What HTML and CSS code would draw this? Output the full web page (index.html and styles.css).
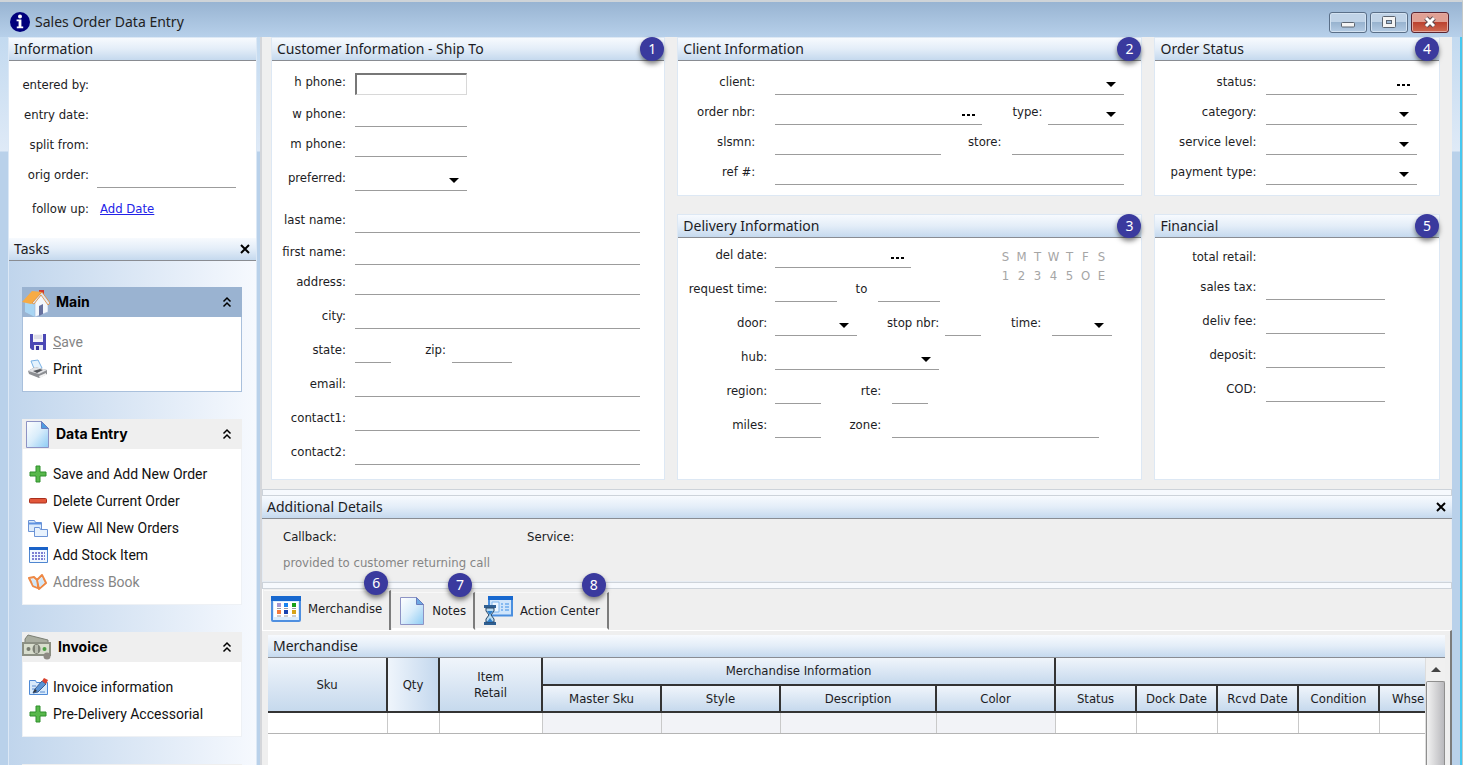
FILE: index.html
```html
<!DOCTYPE html>
<html lang="en">
<head>
<meta charset="utf-8">
<title>Sales Order Data Entry</title>
<link rel="stylesheet" href="styles.css">
</head>
<body>
<div class="window">
  <header class="titlebar">
    <svg class="app-icon" viewBox="0 0 20 20" width="20" height="20"><circle cx="10" cy="10" r="10" fill="#00007c"/><circle cx="10" cy="4.4" r="2" fill="#fff"/><path d="M6.6 7.6h4.8v7h1.8v1.6H6.8v-1.6h1.8V9.2h-2z" fill="#fff"/></svg>
    <h1>Sales Order Data Entry</h1>
    <div class="win-buttons">
      <button class="win-btn" aria-label="Minimize"><svg width="16" height="14" viewBox="0 0 16 14"><rect x="1.5" y="7.5" width="13" height="4.500" rx="1" fill="#f4f4f4" stroke="#5b6470"/></svg></button>
      <button class="win-btn" aria-label="Maximize"><svg width="16" height="14" viewBox="0 0 16 14"><rect x="1.500" y="1.500" width="13" height="11" rx="1" fill="#f4f4f4" stroke="#5b6470"/><rect x="5.500" y="5.500" width="5" height="3" fill="#9db8d4" stroke="#5b6470"/></svg></button>
      <button class="win-btn win-close" aria-label="Close"><svg width="16" height="14" viewBox="0 0 16 14"><path d="M4 3l8 8M12 3l-8 8" stroke="#5d4a50" stroke-width="5"/><path d="M4 3l8 8M12 3l-8 8" stroke="#fff" stroke-width="3"/></svg></button>
    </div>
  </header>

  <div class="workspace">
    <aside class="sidebar">
      <section class="info">
        <h2 class="bar">Information</h2>
        <div class="info-body">
          <div class="row r36"><span class="label">entered by:</span></div>
          <div class="row"><span class="label">entry date:</span></div>
          <div class="row"><span class="label">split from:</span></div>
          <div class="row"><label class="label" for="orig">orig order:</label><input id="orig" class="line"></div>
          <div class="row r34"><span class="label">follow up:</span><a href="#" class="add-date">Add Date</a></div>
        </div>
      </section>
      <section class="tasks">
        <div class="bar"><h2>Tasks</h2><button class="x" aria-label="Close tasks"><svg width="10" height="10" viewBox="0 0 10 10"><path d="M1 1l8 8M9 1L1 9" stroke="#000" stroke-width="2"/></svg></button></div>
        <div class="tasks-body">
          <section class="group group-main">
            <h3><svg width="28" height="29" viewBox="0 0 28 29"><path d="M17 2h5v9h-5z" fill="#cf3a30"/><path d="M3 14v10l10 5V14L9 7z" fill="#a9d5f3"/><path d="M13 14l7-8 6 9v9l-13 5z" fill="#f3f7fc" stroke="#9fb6d8" stroke-width=".6"/><path d="M0 14L10 3l10 1-9 11-2 1z" fill="#f7ab45"/><path d="M20 4l8 11-2 2-7-10-7 9-2-1z" fill="#dfe7f3" stroke="#e08a35" stroke-width=".8"/><path d="M17 18l4-2v10l-4 2z" fill="#66709e"/></svg><span>Main</span>
              <button class="fold" aria-label="Collapse Main"><svg width="10" height="12" viewBox="0 0 10 12"><path d="M1.500 5.500L5 2l3.500 3.500M1.500 10.500L5 7l3.500 3.500" fill="none" stroke="#000" stroke-width="1.500"/></svg></button></h3>
            <div class="group-body">
              <button class="task off"><svg width="20" height="20" viewBox="0 0 20 20"><path d="M2 2h16v16H4l-2-2z" fill="#4a48b4"/><path d="M5 2h10v8H5z" fill="#f5f5f7"/><path d="M6 4h8M6 6h8" stroke="#c9c9d8"/><path d="M6 13h9v5H6z" fill="#e6e8f2"/><path d="M8 14h3v4H8z" fill="#35339b"/></svg><span><u>S</u>ave</span></button>
              <button class="task"><svg width="20" height="20" viewBox="0 0 20 20"><path d="M3 2l7-1 4 8-7 3z" fill="#e4f2fd" stroke="#7ab2e6"/><path d="M0 12l7-4 12 3v4l-8 4L1 15z" fill="#8d8f93"/><path d="M0 12l7-4 12 3-8 4z" fill="#e2e3e6"/><path d="M5 12l7-2 3 1-6 3z" fill="#55585d"/><path d="M11 17l7-3v2l-6 3z" fill="#f2f2f2"/></svg><span>Print</span></button>
            </div>
          </section>
          <section class="group">
            <h3><svg width="28" height="29" viewBox="0 0 28 29"><defs><linearGradient id="pg" x1="0" y1="0" x2="1" y2="1"><stop offset="0" stop-color="#fff"/><stop offset=".5" stop-color="#d9edfb"/><stop offset="1" stop-color="#8ccbf4"/></linearGradient></defs><path d="M4.500 1.500h15l7 7v19h-22z" fill="url(#pg)" stroke="#8d93c4"/><path d="M19.500 1.500v7h7z" fill="#4f9be0" stroke="#6a7cbd"/></svg><span>Data Entry</span>
              <button class="fold" aria-label="Collapse Data Entry"><svg width="10" height="12" viewBox="0 0 10 12"><path d="M1.500 5.500L5 2l3.500 3.500M1.500 10.500L5 7l3.500 3.500" fill="none" stroke="#000" stroke-width="1.500"/></svg></button></h3>
            <div class="group-body">
              <button class="task"><svg width="20" height="20" viewBox="0 0 20 20"><path d="M8 2h4v6h6v4h-6v6H8v-6H2V8h6z" fill="#58b84b" stroke="#2f8f2c"/></svg><span>Save and Add New Order</span></button>
              <button class="task"><svg width="20" height="20" viewBox="0 0 20 20"><rect x="1.500" y="7.500" width="17" height="4.500" rx="1" fill="#e2573a" stroke="#a92f1d"/></svg><span>Delete Current Order</span></button>
              <button class="task"><svg width="20" height="20" viewBox="0 0 20 20"><path d="M.5 2.500h6l1 2h6v9h-13z" fill="#dcebfb" stroke="#6b93d6"/><path d="M1 5.500h12" stroke="#5f92e0" stroke-width="2"/><path d="M6.500 9.500h5l1 2h7v7h-13z" fill="#e8f2fd" stroke="#6b93d6"/></svg><span>View All New Orders</span></button>
              <button class="task"><svg width="20" height="20" viewBox="0 0 20 20"><path d="M1.500 2.500h18v15h-18z" fill="#f2f8ff" stroke="#4f86d0"/><path d="M1 2h19v3H1z" fill="#1a62c8"/><path d="M4 8h13M4 11h13M4 14h13" stroke="#7d7fd2" stroke-width="2" stroke-dasharray="2 1"/></svg><span>Add Stock Item</span></button>
              <button class="task off"><svg width="20" height="20" viewBox="0 0 20 20"><path d="M1 6l5-1 3 3 1 8-5-2zM9 8l5-5 4 8-7 6z" fill="#e4f1fb" stroke="#ee8844" stroke-width="2" stroke-linejoin="round"/><path d="M4 7l4 2 1 6-4-2zM11 9l3-4 2 6-4 4z" fill="#cfe6f8"/></svg><span>Address Book</span></button>
            </div>
          </section>
          <section class="group">
            <h3><svg width="30" height="26" viewBox="0 0 30 26"><path d="M3 5l3-4 20 5v5H3z" fill="#a9ada0" stroke="#7b7f74"/><path d="M0 8h29v14H0z" fill="#8c9083"/><path d="M2 10h25v10H2z" fill="#d8ddcd"/><ellipse cx="14.500" cy="15" rx="4" ry="5" fill="#7c8074"/><path d="M13 11h3v8h-3z" fill="#b7bbae"/><circle cx="6.500" cy="15" r="2" fill="#777b6f"/><circle cx="22.500" cy="15" r="2" fill="#4e9f45"/><circle cx="25" cy="22" r="3.500" fill="#8e8a83"/></svg><span>Invoice</span>
              <button class="fold" aria-label="Collapse Invoice"><svg width="10" height="12" viewBox="0 0 10 12"><path d="M1.500 5.500L5 2l3.500 3.500M1.500 10.500L5 7l3.500 3.500" fill="none" stroke="#000" stroke-width="1.500"/></svg></button></h3>
            <div class="group-body">
              <button class="task"><svg width="20" height="20" viewBox="0 0 20 20"><path d="M1.500 3.500h6l1 2h11v12h-18z" fill="#d8eafb" stroke="#4f8ad6"/><path d="M4 9h4M4 12h4M12 15h5" stroke="#5a8cd0"/><path d="M5 16l2-4 7-8 4 3-8 8z" fill="#5a93d4" stroke="#3b5e94"/><path d="M14 4l2-3 4 2-2 4z" fill="#d8432f"/><path d="M5 16l2-4 2 2z" fill="#333"/></svg><span>Invoice information</span></button>
              <button class="task"><svg width="20" height="20" viewBox="0 0 20 20"><path d="M8 2h4v6h6v4h-6v6H8v-6H2V8h6z" fill="#58b84b" stroke="#2f8f2c"/></svg><span>Pre-Delivery Accessorial</span></button>
            </div>
          </section>
          <section class="group"><h3><svg width="28" height="28" viewBox="0 0 28 28"><path d="M14 0l4 9 9 1-7 6 2 9-8-5-8 5 2-9-7-6 9-1z" fill="#f4d84a"/></svg></h3></section>
        </div>
      </section>
    </aside>

    <main class="main">
      <form class="panels">
        <section class="panel customer">
          <h2 class="bar">Customer Information - Ship To</h2><span class="badge">1</span>
          <div class="row r34"><label class="label" for="hp">h phone:</label><input id="hp" class="boxed w112"></div>
          <div class="row r32"><label class="label" for="wp">w phone:</label><input id="wp" class="line w112"></div>
          <div class="row"><label class="label" for="mp">m phone:</label><input id="mp" class="line w112"></div>
          <div class="row r34"><label class="label" for="pref">preferred:</label><span class="combo w112"><select id="pref"></select></span></div>
          <div class="row r42"><label class="label" for="ln">last name:</label><input id="ln" class="line"></div>
          <div class="row r32"><label class="label" for="fn">first name:</label><input id="fn" class="line"></div>
          <div class="row"><label class="label" for="ad">address:</label><input id="ad" class="line"></div>
          <div class="row r34"><label class="label" for="ci">city:</label><input id="ci" class="line"></div>
          <div class="row r34"><label class="label" for="st">state:</label><input id="st" class="line w36"><label class="label l50" for="zip">zip:</label><input id="zip" class="line w60"></div>
          <div class="row r34"><label class="label" for="em">email:</label><input id="em" class="line"></div>
          <div class="row r34"><label class="label" for="c1">contact1:</label><input id="c1" class="line"></div>
          <div class="row r34"><label class="label" for="c2">contact2:</label><input id="c2" class="line"></div>
        </section>

        <section class="panel client">
          <h2 class="bar">Client Information</h2><span class="badge">2</span>
          <div class="row r34"><label class="label" for="cl">client:</label><span class="combo"><select id="cl"></select></span></div>
          <div class="row"><label class="label" for="on">order nbr:</label><span class="lookup"><input id="on"><button type="button" aria-label="Look up order"><i></i></button></span><label class="label l60" for="ty">type:</label><span class="combo w76 near"><select id="ty"></select></span></div>
          <div class="row"><label class="label" for="sl">slsmn:</label><input id="sl" class="line"><label class="label l60" for="sto">store:</label><input id="sto" class="line w112 mid"></div>
          <div class="row"><label class="label" for="rf">ref #:</label><input id="rf" class="line"></div>
        </section>

        <section class="panel status">
          <h2 class="bar">Order Status</h2><span class="badge">4</span>
          <div class="row r34"><label class="label" for="os">status:</label><span class="lookup"><input id="os"><button type="button" aria-label="Look up status"><i></i></button></span></div>
          <div class="row"><label class="label" for="ca">category:</label><span class="combo"><select id="ca"></select></span></div>
          <div class="row"><label class="label" for="sv">service level:</label><span class="combo"><select id="sv"></select></span></div>
          <div class="row"><label class="label" for="pt">payment type:</label><span class="combo"><select id="pt"></select></span></div>
        </section>

        <section class="panel delivery">
          <h2 class="bar">Delivery Information</h2><span class="badge">3</span>
          <div class="split">
            <div>
              <div class="row"><label class="label" for="dd">del date:</label><span class="lookup w136"><input id="dd"><button type="button" aria-label="Pick delivery date"><i></i></button></span></div>
              <div class="row r34"><label class="label" for="rt1">request time:</label><input id="rt1" class="line w62"><label class="label l30" for="rt2">to</label><input id="rt2" class="line w62 mid"></div>
            </div>
            <div class="days"><span>S</span><span>M</span><span>T</span><span>W</span><span>T</span><span>F</span><span>S</span><span>1</span><span>2</span><span>3</span><span>4</span><span>5</span><span>O</span><span>E</span></div>
          </div>
          <div class="row r34"><label class="label" for="do">door:</label><span class="combo w82"><select id="do"></select></span><label class="label l80" for="sn">stop nbr:</label><input id="sn" class="line w36 near"><label class="label l60" for="ti">time:</label><span class="combo w60 mid"><select id="ti"></select></span></div>
          <div class="row r34"><label class="label" for="hu">hub:</label><span class="combo w164"><select id="hu"></select></span></div>
          <div class="row r34"><label class="label" for="re">region:</label><input id="re" class="line w46"><label class="label l60" for="rte">rte:</label><input id="rte" class="line w36 mid"></div>
          <div class="row r34"><label class="label" for="mi">miles:</label><input id="mi" class="line w46"><label class="label l60" for="zo">zone:</label><input id="zo" class="line mid"></div>
        </section>

        <section class="panel financial">
          <h2 class="bar">Financial</h2><span class="badge">5</span>
          <div class="row r32"><span class="label">total retail:</span></div>
          <div class="row"><label class="label" for="tx">sales tax:</label><input id="tx" class="line"></div>
          <div class="row r34"><label class="label" for="df">deliv fee:</label><input id="df" class="line"></div>
          <div class="row r34"><label class="label" for="dp">deposit:</label><input id="dp" class="line"></div>
          <div class="row r34"><label class="label" for="cod">COD:</label><input id="cod" class="line"></div>
        </section>
      </form>

      <div class="splitter"></div>
      <section class="details">
        <div class="bar"><h2>Additional Details</h2><button class="x" aria-label="Close details"><svg width="10" height="10" viewBox="0 0 10 10"><path d="M1 1l8 8M9 1L1 9" stroke="#000" stroke-width="2"/></svg></button></div>
        <div class="details-body"><span>Callback:</span><span>Service:</span><span class="hint">provided to customer returning call</span></div>
      </section>
      <div class="splitter"></div>

      <nav class="tabs">
        <button class="tab active"><svg width="30" height="26" viewBox="0 0 30 26"><rect x="1" y="1" width="28" height="24" rx="1" fill="#dcedfd" stroke="#4f8fe0" stroke-width="2"/><path d="M0 0h30v5H0z" fill="#1768cf"/><path d="M3 6h24v15H3z" fill="#fff"/><path d="M6 7h4v4H6z" fill="#a597cf"/><path d="M13 7h4v4h-4z" fill="#1a84f0"/><path d="M21 7h4v4h-4z" fill="#18a018"/><path d="M6 14h4v4H6z" fill="#f47b3c"/><path d="M13 14h4v4h-4z" fill="#1742b0"/><path d="M21 14h4v4h-4z" fill="#d6a318"/><path d="M6 12.500h4M13 12.500h4M21 12.500h4M6 20h4M13 20h4M21 20h4" stroke="#9a9aa2"/></svg><span>Merchandise</span><span class="badge">6</span></button>
        <button class="tab"><svg width="26" height="30" viewBox="0 0 26 30"><path d="M1.500 1.500h16l7 7v20h-23z" fill="url(#pg)" stroke="#8d93c4"/><path d="M17.500 1.500v7h7z" fill="#6da9e4" stroke="#6a7cbd"/></svg><span>Notes</span><span class="badge">7</span></button>
        <button class="tab"><svg width="30" height="30" viewBox="0 0 30 30"><rect x="6" y="1.500" width="23" height="18" fill="#cfe5fb" stroke="#4a8fdf" stroke-width="2"/><path d="M5 0h25v4H5z" fill="#1768cf"/><path d="M9 6h7v10H9z" fill="#eef7ff" stroke="#7fb6ef"/><path d="M18 8h2M22 8h4M18 11h2M22 11h4M18 14h2M22 14h4" stroke="#3d8fe6"/><path d="M1 9h12v3H1zM1 26h12v3H1z" fill="#2f5f92"/><path d="M3 12h8v3l-3 4 3 4v3H3v-3l3-4-3-4z" fill="#b9dcf2" stroke="#2b4766"/><path d="M4 15h6l-3 4zM4 26l3-4 3 4z" fill="#2f7fcb"/></svg><span>Action Center</span><span class="badge">8</span></button>
      </nav>

      <section class="merch">
        <h2 class="bar">Merchandise</h2>
        <div class="grid-wrap">
          <div class="grid-clip">
            <table>
              <colgroup><col class="c119"><col class="c52"><col class="c103"><col class="c119"><col class="c119"><col class="c156"><col class="c119"><col class="c81"><col class="c81"><col class="c81"><col class="c81"><col class="c81"></colgroup>
              <thead>
                <tr><th rowspan="2">Sku</th><th rowspan="2" class="sorted">Qty</th><th rowspan="2">Item<br>Retail</th><th colspan="4">Merchandise Information</th><th colspan="5"></th></tr>
                <tr><th>Master Sku</th><th>Style</th><th>Description</th><th>Color</th><th>Status</th><th>Dock Date</th><th>Rcvd Date</th><th>Condition</th><th class="cut">Whse</th></tr>
              </thead>
              <tbody><tr><td></td><td></td><td></td><td class="ro"></td><td class="ro"></td><td class="ro"></td><td class="ro"></td><td></td><td></td><td></td><td></td><td></td></tr></tbody>
            </table>
          </div>
          <div class="scrollbar"><button class="up" aria-label="Scroll up"></button><div class="thumb"></div></div>
        </div>
      </section>
    </main>
  </div>
</div>
</body>
</html>
```
FILE: styles.css
```css
* { box-sizing: border-box; }
body {
  margin: 0;
  font-family: "DejaVu Sans Condensed", "DejaVu Sans", sans-serif;
  font-size: 13px;
  line-height: 16px;
  color: #1c1c24;
}
h1, h2, h3 { margin: 0; font-weight: 400; }
button, input, select { font: inherit; color: inherit; }
button { margin: 0; padding: 0; border: 0; background: none; }

.window {
  display: flex;
  flex-direction: column;
  height: 100vh;
  overflow: hidden;
  background: linear-gradient(#c3daf0 37px, #dfeaf7 149px, #b9d1ea 150px);
  border-top: 2px solid #cfd4d8;
  border-right: 1px solid #c4c8c8;
  box-shadow: inset -2px 0 #46c8f0;
}
.titlebar {
  display: flex;
  align-items: center;
  gap: 5px;
  height: 35px;
  flex: none;
  padding: 5px 13px 0 10px;
  background: linear-gradient(#98b4d2, #b7d0ea);
}
.titlebar h1 { font-family: "Noto Sans", sans-serif; font-size: 14px; color: #222; }
.win-buttons { display: flex; gap: 3px; margin-left: auto; }
.win-btn {
  display: grid;
  place-items: center;
  width: 38px;
  height: 21px;
  border: 1px solid #5a6f88;
  border-radius: 3px;
  box-shadow: inset 0 0 0 1px #d3e2f1;
  background: linear-gradient(#c0d3e7 48%, #98b3cf 50%, #b4cbe4);
}
.win-close {
  border-color: #5a2430;
  box-shadow: inset 0 0 0 1px #e2aaa2;
  background: linear-gradient(#e0a094 48%, #bc4230 50%, #cf6a52);
}

.workspace { display: flex; flex: 1; min-height: 0; padding: 0 10px 0 8px; }

.bar {
  display: flex;
  align-items: center;
  justify-content: space-between;
  height: 23px;
  padding: 0 6px 0 5px;
  font-family: "Noto Sans", sans-serif;
  font-size: 14px;
  line-height: 20px;
  background: linear-gradient(#f7fafe, #e3edf8 50%, #c5d9ee);
  border-bottom: 1px solid #898c92;
}
.bar h2 { font-size: 14px; }
.x { display: grid; place-items: center; width: 10px; height: 20px; }

.sidebar {
  display: flex;
  flex-direction: column;
  width: 249px;
  flex: none;
  border: 1px solid #dce8f5;
  border-bottom: 0;
  background: #e3edf8;
}
.info-body { height: 177px; padding-top: 1px; background: #fff; }
.info .label { width: 80px; }
.info .line { flex: none; width: 139px; margin-left: 8px; }
.add-date { margin-left: 11px; padding-bottom: 5px; color: #2222e8; }
.tasks { display: flex; flex-direction: column; flex: 1; min-height: 0; }
.tasks-body {
  display: flex;
  flex-direction: column;
  gap: 27px;
  flex: 1;
  min-height: 0;
  padding: 26px 14px 0 13px;
  background: linear-gradient(90deg, #c0d5ec, #f6f9fe);
}
.group { flex: none; font-family: Roboto, "Liberation Sans", sans-serif; font-size: 14px; }
.group h3 {
  display: flex;
  align-items: center;
  gap: 6px;
  height: 30px;
  padding-right: 10px;
  font-family: Inter, sans-serif;
  font-size: 14px;
  font-weight: 700;
  color: #000;
  background: #efefef;
}
.group h3 svg { flex: none; }
.fold { display: grid; place-items: center; margin-left: auto; }
.group-body {
  padding: 11px 0 9px 5px;
  background: #fff;
  border: 1px solid #eef1f5;
  border-top: 0;
}
.group-main h3 { background: #9ab3d1; }
.group-main .group-body { border-color: #a9c0dc; }
.task { display: flex; align-items: center; gap: 5px; height: 27px; width: 100%; color: #111; }
.task.off { color: #858585; }

.main {
  display: flex;
  flex-direction: column;
  flex: 1;
  min-width: 0;
  margin-left: 3px;
  border-left: 2px solid #d4d6da;
  background: #efefef;
}
.panels {
  display: grid;
  grid-template-columns: minmax(0, 395fr) minmax(0, 466fr) minmax(0, 286fr);
  grid-template-rows: auto 1fr;
  gap: 18px 12px;
  padding: 0 12px 9px 9px;
}
.panel {
  position: relative;
  background: #fff;
  border: 1px solid #dde8f4;
  padding-bottom: 10px;
}
.customer { grid-row: 1 / 3; padding-bottom: 14px; }
.delivery { padding-bottom: 40px; }

.badge {
  position: absolute;
  top: -1px;
  right: 0;
  width: 24px;
  height: 24px;
  border-radius: 50%;
  background: #3a3a9e;
  color: #fff;
  font: 14px/24px "Noto Sans", sans-serif;
  text-align: center;
  box-shadow: 0 3px 5px rgba(0, 0, 0, .5);
}

.row { display: flex; align-items: flex-end; height: 30px; }
.r32 { height: 32px; }
.r34 { height: 34px; }
.r36 { height: 36px; }
.r42 { height: 42px; }
.label { flex: none; padding-bottom: 5px; text-align: right; white-space: nowrap; }
.line, .lookup, .combo {
  flex: 1;
  min-width: 0;
  height: 20px;
  padding: 0;
  border: 0;
  border-bottom: 1px solid #9c9c9c;
  border-radius: 0;
  background: none;
}
.boxed {
  height: 22px;
  border: 1px solid #d8d8d8;
  border-top: 2px solid #777;
  border-left: 2px solid #777;
  background: #fff;
}
.lookup, .combo { display: flex; position: relative; }
.lookup input, .combo select {
  width: 100%;
  min-width: 0;
  border: 0;
  background: none;
  appearance: none;
}
.lookup button { padding: 0 7px; }
.lookup i {
  display: block;
  width: 13px;
  height: 2px;
  background: repeating-linear-gradient(90deg, #000 0 3px, transparent 3px 5px);
}
.combo::after {
  content: "";
  position: absolute;
  right: 8px;
  top: 7px;
  border: 5px solid transparent;
  border-top-color: #000;
  border-bottom: 0;
  pointer-events: none;
}
.row .w36 { flex: none; width: 36px; }
.row .w46 { flex: none; width: 46px; }
.row .w60 { flex: none; width: 60px; }
.row .w62 { flex: none; width: 62px; }
.row .w76 { flex: none; width: 76px; }
.row .w82 { flex: none; width: 82px; }
.row .w112 { flex: none; width: 112px; }
.row .w136 { flex: none; width: 136px; }
.row .w164 { flex: none; width: 164px; }

.customer .row { padding-right: 24px; }
.customer .label { width: 74px; margin-right: 9px; }
.client .row { padding-right: 17px; }
.client .label { width: 77px; margin-right: 20px; }
.status .row { padding-right: 22px; }
.status .label, .financial .label { width: 101px; margin-right: 10px; }
.financial .row { padding-right: 54px; }
.delivery .row { padding-right: 42px; }
.delivery .label { width: 89px; margin-right: 8px; }
.panel .row .l30 { width: 30px; }
.panel .row .l50 { width: 55px; margin-right: 6px; }
.panel .row .l60 { width: 60px; }
.panel .row .l80 { width: 82px; }
.panel .row .label:has(+ .near) { margin-right: 6px; }
.panel .row .label:has(+ .mid) { margin-right: 11px; }

.split { display: flex; justify-content: space-between; }
.split .row { padding-right: 0; }
.days {
  display: grid;
  grid-template-columns: repeat(7, 16px);
  grid-auto-rows: 19px;
  align-content: start;
  justify-items: center;
  padding: 11px 32px 0 0;
  color: #a5a5a5;
}

.splitter { flex: none; height: 7px; border: 1px solid #cdd3da; background: #f6f9fd; }
.details { flex: none; }
.details-body {
  display: grid;
  grid-template-columns: 244px 1fr;
  row-gap: 10px;
  height: 63px;
  padding: 10px 20px;
  border: 1px solid #e6ecf3;
  border-top: 0;
}
.hint { grid-column: 1 / 3; color: #858585; }

.tabs { display: flex; align-items: flex-end; gap: 1px; flex: none; padding: 1px 1px 0; border-left: 1px solid #fff; }
.tab {
  position: relative;
  display: flex;
  align-items: center;
  gap: 7px;
  height: 38px;
  padding: 0 7px;
  border-right: 2px solid #7c7c7c;
  border-top: 1px solid #f8f8f8;
  border-bottom: 2px solid #fff;
}
.tab.active { height: 40px; padding-bottom: 3px; border-bottom: 0; }
.tab .badge { top: -20px; right: 1px; }

.merch {
  display: flex;
  flex-direction: column;
  flex: 1;
  min-height: 0;
  padding: 4px 5px 0 6px;
  border-top: 1px solid #fff;
  border-right: 2px solid #7c7c7c;
}
.merch .bar { flex: none; }
.grid-wrap { display: flex; flex: 1; min-height: 0; background: #fff; }
.grid-clip { flex: 1; min-width: 0; overflow: hidden; }
table { width: 1192px; table-layout: fixed; border-collapse: collapse; }
.c52 { width: 52px; }
.c81 { width: 81px; }
.c103 { width: 103px; }
.c119 { width: 119px; }
.c156 { width: 156px; }
th {
  height: 27px;
  padding: 0;
  font-weight: 400;
  border-right: 2px solid #333;
  border-bottom: 2px solid #333;
  background: linear-gradient(#f0f5fb, #c6d9ed);
}
th.sorted { background: linear-gradient(90deg, #eff5fc, #c4d8ee); }
th.cut { text-align: left; padding-left: 12px; }
td { height: 21px; border-right: 1px solid #c9c9c9; border-bottom: 1px solid #b4b4b4; }
td.ro { background: #f2f3f7; }
.scrollbar { display: flex; flex-direction: column; width: 20px; background: #f0f0f0; border-left: 1px solid #ddd; }
.up { display: grid; place-items: center; height: 23px; }
.up::before { content: ""; border: 5px solid transparent; border-top: 0; border-bottom-color: #444; }
.thumb { flex: 1; border: 1px solid #8f8f8f; border-bottom: 0; border-radius: 2px 2px 0 0; background: linear-gradient(90deg, #f2f2f2, #b9b9bd); }
```
